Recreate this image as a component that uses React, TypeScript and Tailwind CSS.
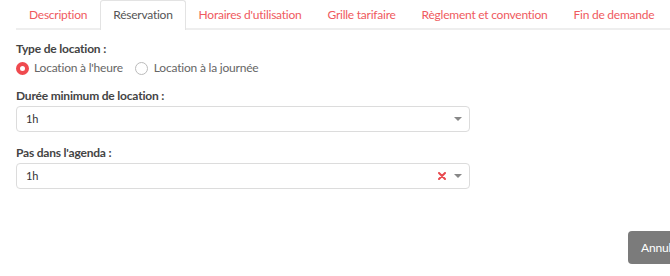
import React from 'react';

const tabs = [
  'Description',
  'Réservation',
  "Horaires d'utilisation",
  'Grille tarifaire',
  'Règlement et convention',
  'Fin de demande',
];

function Caret() {
  return (
    <span className="ml-[8px] inline-block h-0 w-0 border-x-[4px] border-t-[4px] border-x-transparent border-t-[#888]" />
  );
}

function ClearIcon() {
  return (
    <svg width="8" height="8" viewBox="0 0 8 8" className="shrink-0">
      <path d="M1 1L7 7M7 1L1 7" stroke="#e84a4f" strokeWidth="2" strokeLinecap="round" />
    </svg>
  );
}

function SelectBox({ value, clearable }: { value: string; clearable?: boolean }) {
  return (
    <div className="flex h-[26px] w-[454px] items-center rounded-[4px] border border-[#dcdcdc] bg-white pl-[9px] pr-[7px]">
      <span className="flex-1 text-[11px] text-[#333]">{value}</span>
      {clearable && <ClearIcon />}
      <Caret />
    </div>
  );
}

export default function App() {
  return (
    <div className="h-[276px] w-[670px] overflow-hidden bg-white font-['Lato',sans-serif] text-[12px] tracking-[-0.2px]">
      <div className="ml-[16px] flex h-[30px] items-end whitespace-nowrap border-b-2 border-[#eeeeee] tracking-[-0.24px]">
        {tabs.map((t, i) =>
          i === 1 ? (
            <div
              key={t}
              className="-mb-[2px] flex h-[30px] shrink-0 items-center rounded-t-[3px] border border-b-0 border-[#e3e3e3] bg-white px-[12px] pb-[1px] text-[#555]"
            >
              {t}
            </div>
          ) : (
            <div key={t} className="flex h-[28px] shrink-0 items-center px-[13px] pt-[1px] text-[#ef5a5e]">
              {t}
            </div>
          )
        )}
      </div>

      <div className="px-[16px] pt-[10px] leading-[18px]">
        <div className="font-bold text-[#444]">Type de location :</div>
        <div className="mt-[1px] flex items-center text-[#666]">
          <span className="h-[13px] w-[13px] rounded-full border-[4px] border-[#ef4a4f] bg-white" />
          <span className="ml-[5px]">Location à l'heure</span>
          <span className="ml-[12px] h-[13px] w-[13px] rounded-full border border-[#bbb] bg-white" />
          <span className="ml-[6px]">Location à la journée</span>
        </div>

        <div className="mt-[10px] font-bold text-[#444]">Durée minimum de location :</div>
        <div className="mt-[1px]">
          <SelectBox value="1h" />
        </div>

        <div className="mt-[12px] font-bold text-[#444]">Pas dans l'agenda :</div>
        <div className="mt-[1px]">
          <SelectBox value="1h" clearable />
        </div>

        <div className="mt-[42px] flex">
          <button className="ml-[612px] h-[33px] shrink-0 whitespace-nowrap rounded-[4px] bg-[#7b7b7b] px-[13px] text-[12px] text-white">
            Annuler
          </button>
        </div>
      </div>
    </div>
  );
}
